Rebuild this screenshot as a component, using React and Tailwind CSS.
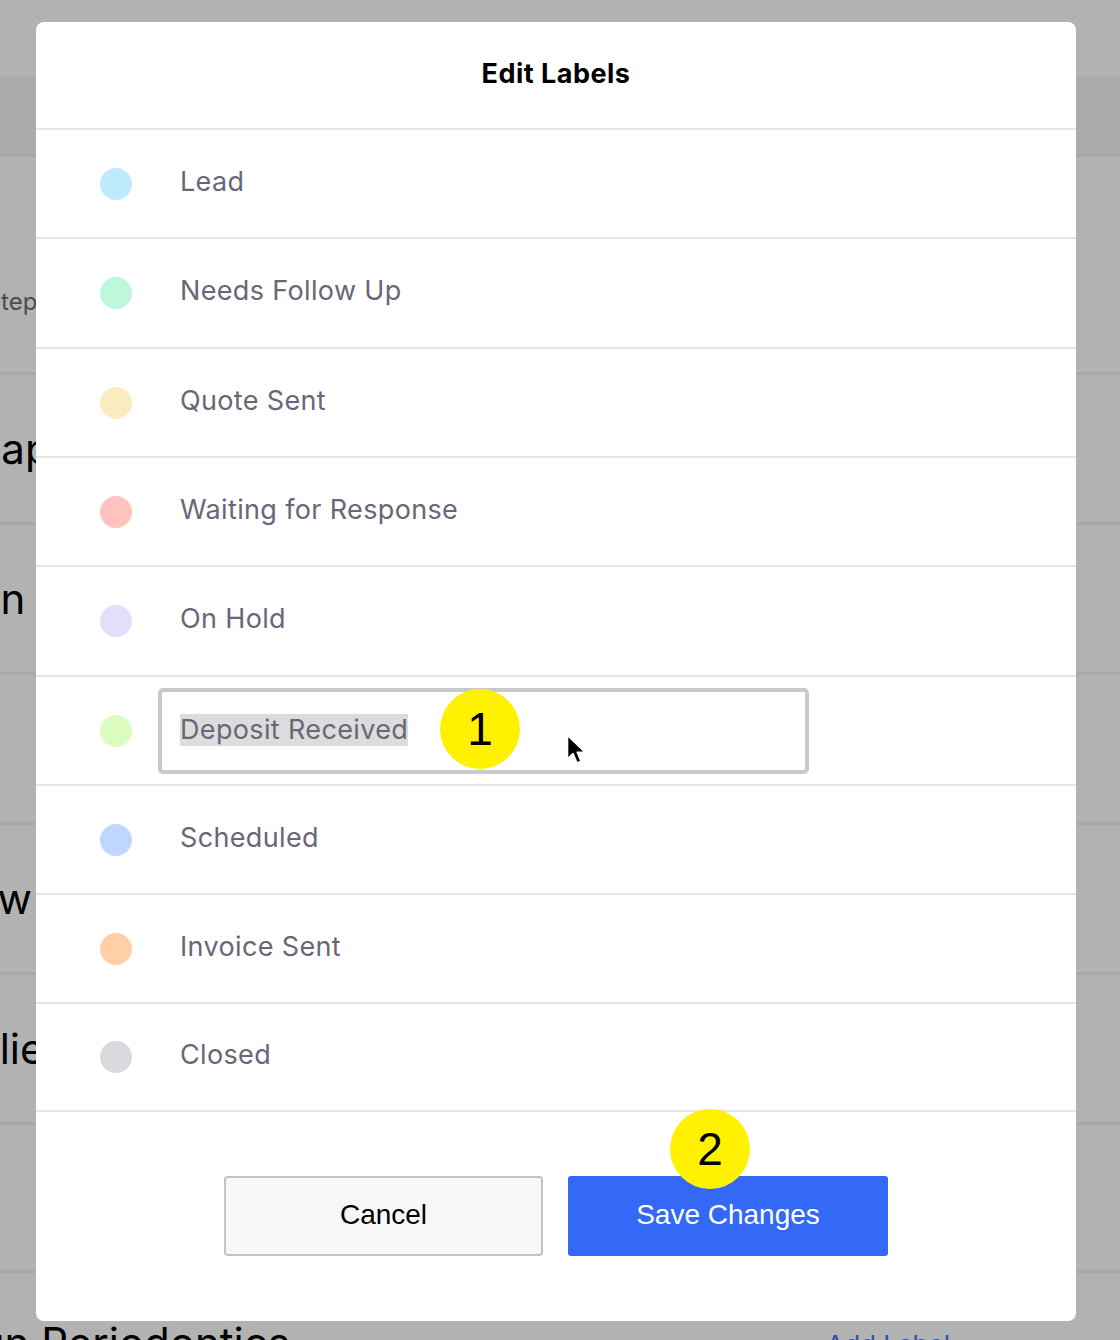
import React from 'react';

const labels = [
  { name: 'Lead', color: 'bg-[#bdebfd]', h: 'h-[109px]' },
  { name: 'Needs Follow Up', color: 'bg-[#bdf7dc]', h: 'h-[110px]' },
  { name: 'Quote Sent', color: 'bg-[#fbecbf]', h: 'h-[109px]' },
  { name: 'Waiting for Response', color: 'bg-[#ffc2bd]', h: 'h-[109px]' },
  { name: 'On Hold', color: 'bg-[#e3defa]', h: 'h-[110px]' },
  { name: 'Deposit Received', color: 'bg-[#dcfcc0]', h: 'h-[109px]', editing: true },
  { name: 'Scheduled', color: 'bg-[#bfd6fe]', h: 'h-[109px]' },
  { name: 'Invoice Sent', color: 'bg-[#ffd0a6]', h: 'h-[109px]' },
  { name: 'Closed', color: 'bg-[#d9d9de]', h: 'h-[108px]' },
];

const Badge = ({ n, className }) => (
  <div
    className={`absolute w-[80px] h-[80px] rounded-full bg-[#fff100] flex items-center justify-center text-[46px] leading-none text-black ${className}`}
    style={{ fontFamily: '"Liberation Sans", Arial, sans-serif' }}
  >
    {n}
  </div>
);

const Cursor = () => (
  <svg className="absolute left-[404px] top-[42px]" width="22" height="34" viewBox="0 0 22 34">
    <path d="M1.5 1.5 L1.5 25 L7 19.5 L11 29 L15 27.3 L11.2 18.2 L19 18.2 Z" fill="#000" stroke="#fff" strokeWidth="1.6" strokeLinejoin="round" />
  </svg>
);

// faded page rows behind the dialog; only the left edge shows
const BgRow = ({ h, text, ml, size = 'text-[42px]', color = 'text-black', pad = '' }) => (
  <div className={`${h} border-b-[3px] border-[#a8a8a8] flex items-center overflow-hidden ${pad}`}>
    {text && <span className={`whitespace-nowrap shrink-0 ${ml} ${size} ${color}`}>{text}</span>}
  </div>
);

const Background = () => (
  <div className="w-[1120px] h-[1340px] overflow-hidden bg-[#b2b2b2]" style={{ fontFamily: 'Inter, "Noto Sans", sans-serif' }}>
    <div className="h-[76px]" />
    <div className="h-[81px] bg-[#ababab] border-b-[3px] border-[#a6a6a6]" />
    <BgRow h="h-[218px]" text="Next Step" ml="-ml-[74px]" size="text-[24px]" color="text-[#4a4a52]" pad="pt-[74px]" />
    <BgRow h="h-[150px]" text="Recap" ml="-ml-[74px]" />
    <BgRow h="h-[150px]" text="Plan" ml="-ml-[60px]" />
    <BgRow h="h-[150px]" />
    <BgRow h="h-[150px]" text="Review" ml="-ml-[110px]" />
    <BgRow h="h-[150px]" text="Client" ml="-ml-[31px]" />
    <BgRow h="h-[148px]" />
    <div className="flex items-start pt-[38px]">
      <div className="text-[42px] text-black whitespace-nowrap -ml-[44px]">Lun Periodontics</div>
      <div className="ml-auto mr-[170px] text-[26px] text-[#2f4fb5] pt-[14px]">Add Label</div>
    </div>
  </div>
);

const App = () => {
  return (
    <div className="relative w-[1120px] h-[1340px] overflow-hidden">
      <Background />
      <div
        className="absolute left-[36px] top-[22px] w-[1040px] h-[1299px] bg-white rounded-[8px] flex flex-col overflow-hidden"
        style={{ fontFamily: 'Inter, "Noto Sans", sans-serif' }}
      >
        <div className="h-[108px] shrink-0 border-b-2 border-[#e4e4e4] flex items-center justify-center pb-[2px]">
          <h1 className="text-[27px] font-bold text-black tracking-[0.5px]">Edit Labels</h1>
        </div>
        {labels.map((l) => (
          <div key={l.name} className={`${l.h} shrink-0 border-b-2 border-[#e4e4e4] flex items-center pl-[64px]`}>
            <div className={`w-[32px] h-[32px] rounded-full shrink-0 ${l.color}`} />
            {l.editing ? (
              <div className="relative ml-[26px] w-[651px] h-[86px] border-4 border-[#c9c9c9] rounded-[5px] flex items-center pl-[18px]">
                <span className="bg-[#dcdcdc] text-[27px] tracking-[0.35px] text-[#686777] leading-[32px] mb-[2px]">{l.name}</span>
                <Badge n="1" className="left-[278px] top-[-3px]" />
                <Cursor />
              </div>
            ) : (
              <span className="ml-[48px] text-[27px] tracking-[0.35px] text-[#686777] leading-[27px] pb-[5px]">{l.name}</span>
            )}
          </div>
        ))}
        <div className="flex-1 flex items-center justify-center gap-[25px] pb-[2px]">
          <button
            className="w-[319px] h-[80px] bg-[#f7f7f7] border-2 border-[#c2c2c8] rounded-[4px] text-[28px] text-black pb-[2px]"
            style={{ fontFamily: '"Liberation Sans", Arial, sans-serif' }}
          >
            Cancel
          </button>
          <div className="relative">
            <button
              className="w-[320px] h-[80px] bg-[#3468f6] rounded-[3px] text-[28px] text-white pb-[2px]"
              style={{ fontFamily: '"Liberation Sans", Arial, sans-serif' }}
            >
              Save Changes
            </button>
            <Badge n="2" className="left-[102px] top-[-67px]" />
          </div>
        </div>
      </div>
    </div>
  );
};

export default App;
